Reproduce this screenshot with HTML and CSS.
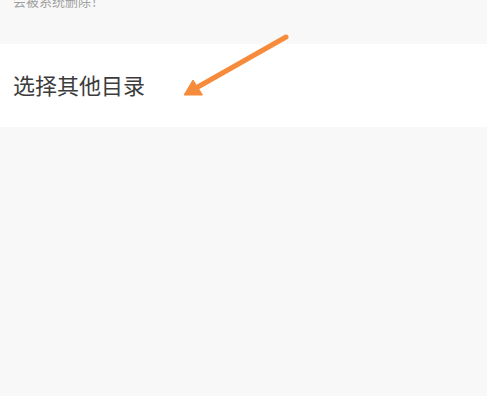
FILE: index.html
```html
<!DOCTYPE html>
<html lang="zh">
<head>
<meta charset="utf-8">
<link rel="stylesheet" href="styles.css">
</head>
<body>
<div class="page">
  <div class="note"><p class="note-text">会被系统删除！</p></div>
  <div class="option">选择其他目录</div>
  <svg class="arrow" width="487" height="130" viewBox="0 0 487 130">
    <line x1="286" y1="37" x2="196" y2="88" stroke="#f68b3b" stroke-width="5" stroke-linecap="round"/>
    <polygon points="184,95 193,80 202.5,95" fill="#f68b3b" stroke="#f68b3b" stroke-width="1" stroke-linejoin="round"/>
  </svg>
</div>
</body>
</html>
```
FILE: styles.css
```css
html, body {
  margin: 0;
  padding: 0;
  background: #f8f8f8;
}
body {
  font-family: "Noto Sans CJK SC", "Noto Sans", sans-serif;
}
.page {
  position: relative;
  width: 487px;
  height: 396px;
  overflow: hidden;
  background: #f8f8f8;
}
.note {
  height: 44px;
  box-sizing: border-box;
  padding: 0 13px;
  overflow: hidden;
}
.note-text {
  margin: -6px 0 0;
  font-size: 13px;
  line-height: 13px;
  color: #a0a0a0;
}
.option {
  height: 83px;
  box-sizing: border-box;
  padding: 0 13px 4px;
  background: #ffffff;
  display: flex;
  align-items: center;
  font-size: 22px;
  line-height: 22px;
  color: #3c3c3c;
}
.arrow {
  position: absolute;
  left: 0;
  top: 0;
}
```
